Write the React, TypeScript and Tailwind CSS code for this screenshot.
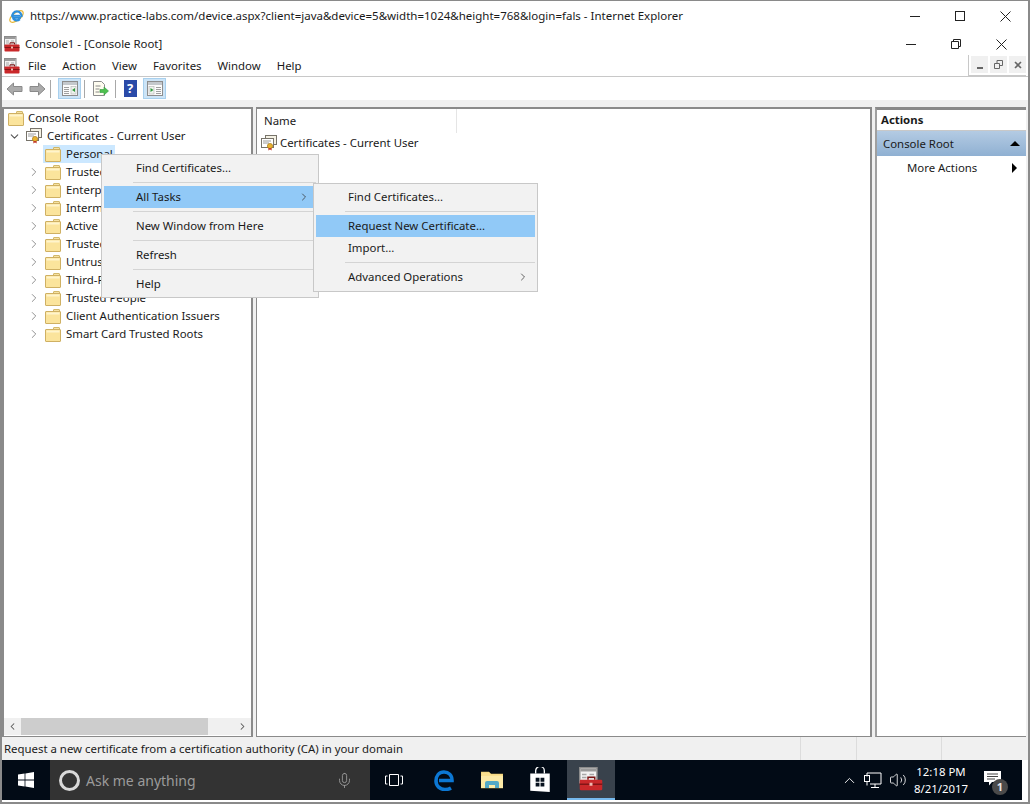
import { ChevronDown, ChevronRight, ChevronLeft, ChevronUp, Mic, Volume2 } from "lucide-react";

const treeItems = [
  { label: "Trusted Root Certification Authorities" },
  { label: "Enterprise Trust" },
  { label: "Intermediate Certification Authorities" },
  { label: "Active Directory User Object" },
  { label: "Trusted Publishers" },
  { label: "Untrusted Certificates" },
  { label: "Third-Party Root Certification Authorities" },
  { label: "Trusted People" },
  { label: "Client Authentication Issuers" },
  { label: "Smart Card Trusted Roots" },
];

function Folder() {
  return (
    <svg width="16" height="15" viewBox="0 0 16 15" className="shrink-0">
      <path d="M8.500 2.500V1a.5.5 0 0 1 .5-.5h5a.5.5 0 0 1 .5.5v1.500z" fill="#f5e2a4" stroke="#c9a94f" strokeWidth="0.800" />
      <rect x="0.500" y="2.500" width="15" height="12" rx="0.500" fill="#fbe49c" stroke="#cfb063" />
      <rect x="1.500" y="3.500" width="13" height="2" fill="#fff4cc" />
    </svg>
  );
}

function CertIcon() {
  return (
    <svg width="16" height="16" viewBox="0 0 16 16" className="shrink-0">
      <rect x="4.500" y="0.500" width="11" height="9" fill="#f4f1e4" stroke="#77736a" />
      <rect x="0.500" y="3.500" width="12" height="9" fill="#fff" stroke="#77736a" />
      <path d="M2 6h8M2 8h6" stroke="#9a9a9a" />
      <circle cx="9" cy="11" r="2.600" fill="#e9b22f" stroke="#a87a14" strokeWidth="0.700" />
      <path d="M7.600 13l-.4 2.600 1.800-1 1.800 1-.4-2.600z" fill="#c23b2a" />
    </svg>
  );
}

function Toolbox({ size = 16 }: { size?: number }) {
  return (
    <svg width={size} height={size} viewBox="0 0 16 16" className="shrink-0">
      <rect x="0.500" y="0.500" width="11.500" height="10" fill="#f2f2f2" stroke="#8b8b8b" />
      <rect x="1" y="1" width="10.500" height="2" fill="#9a9a9a" />
      <path d="M2 5h3M2 7h3M7 5h3M7 7h3" stroke="#a7a7a7" />
      <path d="M6 8.500V6.800h4.500v1.700" fill="none" stroke="#7c1414" />
      <rect x="0.500" y="8.500" width="15" height="7" rx="0.800" fill="#c9282a" />
      <rect x="0.500" y="11" width="15" height="1" fill="#821516" />
      <rect x="7" y="10.500" width="2" height="2" fill="#f0b8b0" />
    </svg>
  );
}

function IeLogo() {
  return (
    <svg width="17" height="17" viewBox="0 0 17 17" className="shrink-0">
      <ellipse cx="8.500" cy="8.500" rx="8" ry="3.800" transform="rotate(-38 8.500 8.500)" fill="none" stroke="#e9b93c" strokeWidth="1.300" />
      <path d="M13 9.500H5.200c.2 3.200 4.500 3.600 6.600 1.600M4.400 9a4.600 4.600 0 1 1 9 0" fill="none" stroke="#2d8fdc" strokeWidth="2.300" />
      <path d="M5 7.600h7" stroke="#2d8fdc" strokeWidth="1.600" />
    </svg>
  );
}

function PaneIcon({ flip }: { flip?: boolean }) {
  return (
    <svg width="16" height="15" viewBox="0 0 16 15">
      <rect x="0.500" y="0.500" width="15" height="14" fill="#fbfbfb" stroke="#8d8d8d" />
      <rect x="1" y="1" width="14" height="3" fill="#c4c8cc" />
      {flip ? (
        <>
          <rect x="2" y="5.500" width="5" height="7.500" fill="#eef3ee" stroke="#b5b5b5" strokeWidth="0.600" />
          <path d="M3.500 7l3 2-3 2z" fill="#2f9a3d" />
          <path d="M9 6.500h5M9 8.500h5M9 10.500h5M9 12.500h5" stroke="#a0a0a0" />
        </>
      ) : (
        <>
          <path d="M2 6.500h5M2 8.500h5M2 10.500h5M2 12.500h5" stroke="#a0a0a0" />
          <rect x="9" y="5.500" width="5" height="7.500" fill="#eef3ee" stroke="#b5b5b5" strokeWidth="0.600" />
          <path d="M13 7l-3 2 3 2z" fill="#2f9a3d" />
        </>
      )}
    </svg>
  );
}

function NavArrow({ right }: { right?: boolean }) {
  return (
    <svg width="17" height="14" viewBox="0 0 17 14" className={right ? "scale-x-[-1]" : ""}>
      <path d="M7.500 1L1 7l6.500 6V9.500H16v-5H7.500z" fill="#ababab" stroke="#8a8a8a" />
    </svg>
  );
}

function MenuRow({ label, active, arrow }: { label: string; active?: boolean; arrow?: boolean }) {
  return (
    <div className={`h-[22px] flex items-center justify-between pl-[32px] pr-[6px] ${active ? "bg-[#91c9f7]" : ""}`}>
      <span>{label}</span>
      {arrow && <ChevronRight size={12} strokeWidth={1.5} className="text-[#333]" />}
    </div>
  );
}

function MenuSep() {
  return (
    <div className="h-[7px] flex items-center pl-[29px]">
      <div className="h-px w-full bg-[#d4d4d4]" />
    </div>
  );
}

function Separator() {
  return <div className="w-px h-[18px] bg-[#a8a8a8]" />;
}

function XMark() {
  return (
    <svg width="11" height="11" viewBox="0 0 11 11">
      <path d="M.5.5l10 10M10.500.5l-10 10" stroke="#222" />
    </svg>
  );
}

export default function App() {
  return (
    <div
      className="relative w-[1030px] h-[804px] overflow-hidden bg-white text-[#1a1a1a] text-[11.4px] flex flex-col border-t border-[#8a8a8a] border-b-2 border-b-[#8a8a8a] border-l-2 border-l-[#8a8a8a] border-r-2 border-r-[#8a8a8a]"
      style={{ fontFamily: '"Noto Sans", "Open Sans", sans-serif' }}
    >
      {/* browser title */}
      <div className="h-[30px] shrink-0 flex items-center pl-[6px]">
        <IeLogo />
        <span className="ml-[5px] text-[11.5px]">
          https://www.practice-labs.com/device.aspx?client=java&amp;device=5&amp;width=1024&amp;height=768&amp;login=fals - Internet Explorer
        </span>
        <div className="ml-auto flex items-center mr-[17px] gap-[35px] text-[#222]">
          <div className="w-[10px] h-px bg-[#222]" />
          <div className="w-[10px] h-[10px] border border-[#222]" />
          <XMark />
        </div>
      </div>

      {/* console title */}
      <div className="h-[24px] shrink-0 flex items-center pl-[2px] pt-[2px]">
        <Toolbox />
        <span className="ml-[5px]">Console1 - [Console Root]</span>
        <div className="ml-auto flex items-center mr-[21px] gap-[35px]">
          <div className="w-[10px] h-px bg-[#222]" />
          <svg width="10" height="10" viewBox="0 0 10 10">
            <path d="M0.500 2.500h7v7h-7zM2.500 2.500v-2h7v7h-2" fill="none" stroke="#222" />
          </svg>
          <XMark />
        </div>
      </div>

      {/* menu bar */}
      <div className="h-[21px] shrink-0 flex items-center pl-[2px]">
        <Toolbox />
        <div className="flex items-center gap-[16px] ml-[8px]">
          <span>File</span>
          <span>Action</span>
          <span>View</span>
          <span>Favorites</span>
          <span>Window</span>
          <span>Help</span>
        </div>
        <div className="ml-auto mr-[2px] h-[21px] flex items-center gap-[2px] border-l border-b border-[#c8c8c8] pl-[2px] pb-px bg-white">
          <div className="w-[17px] h-[17px] bg-[#f0f0f0] flex items-end justify-center pb-[4px]">
            <div className="w-[6px] h-[2px] bg-[#666]" />
          </div>
          <div className="w-[17px] h-[17px] bg-[#f0f0f0] flex items-center justify-center">
            <svg width="9" height="9" viewBox="0 0 9 9">
              <path d="M0.500 3.500h5v5h-5zM3 3V.5h5.500v5H6" fill="none" stroke="#666" />
            </svg>
          </div>
          <div className="w-[17px] h-[17px] bg-[#f0f0f0] flex items-center justify-center">
            <svg width="8" height="8" viewBox="0 0 8 8">
              <path d="M1 1l6 6M7 1L1 7" stroke="#666" strokeWidth="1.600" />
            </svg>
          </div>
        </div>
      </div>

      {/* toolbar */}
      <div className="h-[24px] shrink-0 flex items-center gap-[3px] pl-[2px] border-t border-[#c8c8c8] pr-[2px]">
        <div className="w-[20px] flex justify-center"><NavArrow /></div>
        <div className="w-[20px] flex justify-center"><NavArrow right /></div>
        <Separator />
        <div className="w-[23px] h-[21px] ml-[4px] bg-[#cce4f7] border border-[#a8d0ee] flex items-center justify-center">
          <PaneIcon />
        </div>
        <Separator />
        <div className="w-[24px] flex justify-center">
          <svg width="17" height="16" viewBox="0 0 17 16">
            <path d="M1.500.5h8l3 3v11h-11z" fill="#fffdf0" stroke="#8d8d8d" />
            <path d="M3.500 5h5M3.500 8h4M3.500 11h4" stroke="#888" />
            <path d="M8 8.500h4V6l4.500 4-4.500 4v-2.500H8z" fill="#4ec04e" stroke="#2f9a3d" strokeWidth="0.600" />
          </svg>
        </div>
        <Separator />
        <div className="w-[18px] ml-[2px] flex justify-center">
          <div className="w-[13px] h-[17px] bg-[#2a4aa8] text-white font-bold text-[13px] leading-[17px] text-center">?</div>
        </div>
        <div className="w-[23px] h-[21px] ml-[1px] bg-[#cce4f7] border border-[#a8d0ee] flex items-center justify-center">
          <PaneIcon flip />
        </div>
      </div>

      {/* panes */}
      <div className="flex-1 min-h-0 bg-[#f0f0f0] pt-[7px] flex gap-[3px] pr-[2px]">
        {/* tree pane */}
        <div className="w-[251px] bg-white border-2 border-[#8a8a8a] border-b border-l-2 flex flex-col">
          <div className="flex-1 min-h-0 overflow-hidden">
            <div className="h-[18px] flex items-center pl-[4px] gap-[4px]">
              <Folder />
              <span>Console Root</span>
            </div>
            <div className="h-[18px] flex items-center pl-[4px]">
              <ChevronDown size={13} strokeWidth={2} className="text-[#555] shrink-0" />
              <div className="ml-[5px]"><CertIcon /></div>
              <span className="ml-[5px]">Certificates - Current User</span>
            </div>
            <div className="h-[18px] flex items-center ml-[39px] w-[72px] pl-[2px] bg-[#cce8ff] gap-[5px]">
              <Folder />
              <span>Personal</span>
            </div>
            {treeItems.map((item) => (
              <div key={item.label} className="h-[18px] flex items-center pl-[23px] whitespace-nowrap">
                <ChevronRight size={14} strokeWidth={1.600} className="text-[#8a8a8a] shrink-0" />
                <div className="ml-[4px] shrink-0"><Folder /></div>
                <span className="ml-[5px]">{item.label}</span>
              </div>
            ))}
          </div>
          <div className="h-[17px] mb-px shrink-0 bg-[#f0f0f0] flex items-center">
            <div className="w-[17px] flex justify-center"><ChevronLeft size={11} strokeWidth={2.200} className="text-[#555]" /></div>
            <div className="w-[187px] h-full bg-[#cdcdcd]" />
            <div className="ml-auto w-[17px] flex justify-center"><ChevronRight size={11} strokeWidth={2.200} className="text-[#555]" /></div>
          </div>
        </div>

        {/* result pane */}
        <div className="w-[616px] bg-white border-2 border-[#8a8a8a] border-b border-l">
          <div className="h-[24px] flex items-center">
            <div className="w-[200px] h-full pl-[7px] flex items-center border-r border-[#e5e5e5]">Name</div>
          </div>
          <div className="h-[18px] mt-px flex items-center pl-[4px]">
            <CertIcon />
            <span className="ml-[3px]">Certificates - Current User</span>
          </div>
        </div>

        {/* actions pane */}
        <div className="flex-1 bg-white border-t-[3px] border-t-[#8a8a8a] border-l-2 border-l-[#a0a0a0] border-b border-b-[#8a8a8a]">
          <div className="h-[21px] flex items-center pl-[4px] font-bold border-b border-[#c8c8c8]">Actions</div>
          <div className="h-[25px] flex items-center pl-[6px] pr-[6px] justify-between bg-gradient-to-b from-[#b4cbe3] to-[#8fb0d2]">
            <span>Console Root</span>
            <div className="w-0 h-0 border-l-[5px] border-r-[5px] border-b-[5px] border-l-transparent border-r-transparent border-b-black" />
          </div>
          <div className="h-[24px] flex items-center pl-[30px] pr-[9px] justify-between">
            <span>More Actions</span>
            <div className="w-0 h-0 border-t-[5px] border-b-[5px] border-l-[5px] border-t-transparent border-b-transparent border-l-black" />
          </div>
        </div>
      </div>

      {/* status bar */}
      <div className="h-[23px] shrink-0 bg-[#f0f0f0] flex items-center pl-[2px]">
        <span className="flex-1">Request a new certificate from a certification authority (CA) in your domain</span>
        <div className="w-[56px] h-full border-l border-[#dcdcdc]" />
        <div className="w-[85px] h-full border-l border-[#dcdcdc]" />
        <div className="w-[85px] h-full border-l border-[#dcdcdc] mr-[2px]" />
      </div>

      {/* taskbar */}
      <div className="h-[40px] mb-[2px] shrink-0 bg-[#020b16] flex items-center text-white mr-[6px]">
        <div className="w-[48px] flex justify-center">
          <svg width="16" height="16" viewBox="0 0 16 16" fill="#fff">
            <path d="M0 2.400l6.600-.9v6.100H0zM7.400 1.400L16 0v7.600H7.400zM0 8.400h6.600v6.100L0 13.600zM7.400 8.400H16V16l-8.600-1.400z" />
          </svg>
        </div>
        <div className="w-[320px] h-full bg-[#333333] flex items-center pl-[9px] pr-[14px] text-[#9b9b9b]">
          <div className="w-[21px] h-[21px] rounded-full border-[3px] border-[#d8d8d8]" />
          <span className="ml-[6px] text-[14px]">Ask me anything</span>
          <Mic size={17} strokeWidth={1.200} className="ml-auto mr-[3px] text-[#a0a0a0]" />
        </div>
        <div className="w-[48px] flex justify-center">
          <svg width="18" height="14" viewBox="0 0 18 14" fill="none" stroke="#fff">
            <path d="M4.500 1.500h9v11h-9zM2.500 3H.5v8h2M15.500 3h2v8h-2" />
          </svg>
        </div>
        <div className="w-[50px] flex justify-center ml-[1px]">
          <svg width="20" height="21" viewBox="0 0 20 21" fill="none">
            <path d="M5 10.500h13C18 5 14.500 2 10 2 5 2 2 6 2 11s4 8.500 9 8.500c2.500 0 4.500-.6 6-1.500" stroke="#0c78d4" strokeWidth="3.600" />
          </svg>
        </div>
        <div className="w-[46px] flex justify-center">
          <svg width="22" height="18" viewBox="0 0 22 18">
            <path d="M0 1h8l2 2h12v14H0z" fill="#fbe08f" stroke="#e5c567" strokeWidth="0.500" />
            <path d="M0 5h22v12H0z" fill="#fdeaa6" />
            <path d="M4 17v-5a2 2 0 0 1 2-2h10a2 2 0 0 1 2 2v5h-4v-3H8v3z" fill="#53a9c7" />
          </svg>
        </div>
        <div className="w-[50px] flex justify-center">
          <svg width="22" height="26" viewBox="0 0 20 24">
            <path d="M6 6V3.500a4 4 0 0 1 8 0V6" fill="none" stroke="#fff" strokeWidth="1.200" />
            <path d="M1 6h18v17l-18-1z" fill="#fff" />
            <path d="M6 10h3.500v3.500H6zM10.500 10H14v3.500h-3.500zM6 14.500h3.500V18H6zM10.500 14.500H14V18h-3.500z" fill="#08121e" />
          </svg>
        </div>
        <div className="w-[48px] h-full bg-[#39424c] border-b-[2px] border-[#76b9ed] flex justify-center items-center ml-[2px]">
          <Toolbox size={24} />
        </div>
        <div className="ml-auto flex items-center h-full">
          <ChevronUp size={17} strokeWidth={1.300} className="text-white" />
          <svg width="18" height="17" viewBox="0 0 18 17" fill="none" stroke="#fff" className="ml-[6px]">
            <path d="M3 4.500V1h14v11H6M11 12v3M7 15.500h8" />
            <rect x="0.500" y="3.500" width="5" height="6" />
            <path d="M3 9.500v4" />
          </svg>
          <Volume2 size={18} strokeWidth={1.100} className="ml-[7px] text-white" />
          <div className="w-[60px] ml-[4px] mr-[3px] text-center text-[11.4px] leading-[17px]">
            <div>12:18 PM</div>
            <div>8/21/2017</div>
          </div>
          <div className="relative w-[48px] h-full flex items-center justify-center">
            <svg width="17" height="15" viewBox="0 0 17 15" className="mr-[12px] mb-[3px]">
              <path d="M0 0h17v11H8l-3 3.500V11H0z" fill="#fff" />
              <path d="M3 3h11M3 5.500h11M3 8h8" stroke="#444" />
            </svg>
            <div className="absolute left-[18px] top-[19px] w-[16px] h-[16px] rounded-full bg-[#4a4a4a] text-[11px] leading-[16px] text-center font-bold text-[#e5e5e5]">1</div>
          </div>
        </div>
      </div>

      {/* context menu */}
      <div className="absolute left-[99px] top-[153px] w-[218px] h-[144px] bg-[#f2f2f2] border border-[#c8c8c8] p-[2px] whitespace-nowrap">
        <MenuRow label="Find Certificates..." />
        <MenuSep />
        <MenuRow label="All Tasks" active arrow />
        <MenuSep />
        <MenuRow label="New Window from Here" />
        <MenuSep />
        <MenuRow label="Refresh" />
        <MenuSep />
        <MenuRow label="Help" />
      </div>

      {/* All Tasks submenu */}
      <div className="absolute left-[311px] top-[182px] w-[225px] h-[109px] bg-[#f2f2f2] border border-[#c8c8c8] p-[2px] whitespace-nowrap">
        <MenuRow label="Find Certificates..." />
        <MenuSep />
        <MenuRow label="Request New Certificate..." active />
        <MenuRow label="Import..." />
        <MenuSep />
        <MenuRow label="Advanced Operations" arrow />
      </div>
    </div>
  );
}
